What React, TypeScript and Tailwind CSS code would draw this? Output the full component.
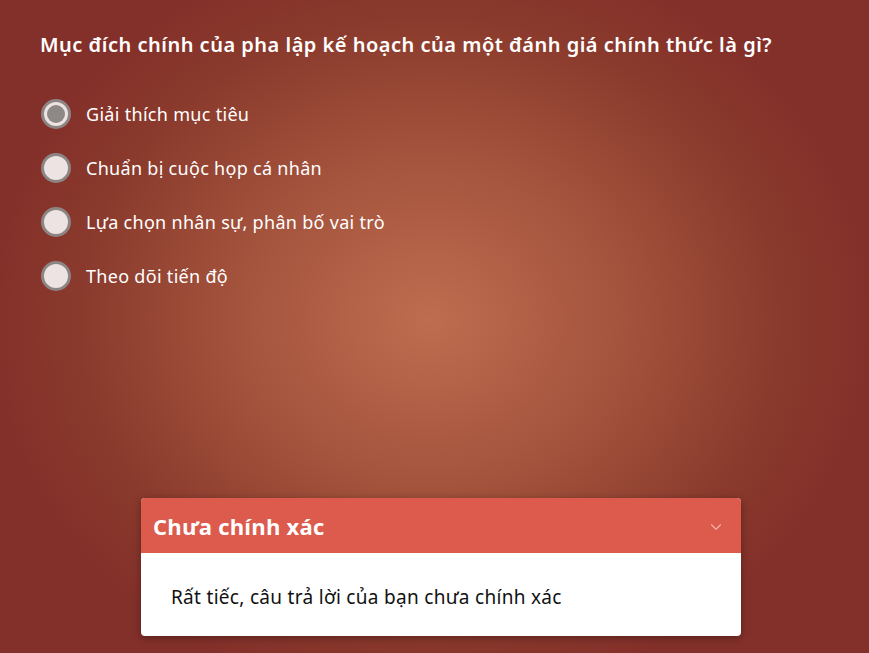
import { ChevronDown } from 'lucide-react'

const options = [
  'Giải thích mục tiêu',
  'Chuẩn bị cuộc họp cá nhân',
  'Lựa chọn nhân sự, phân bố vai trò',
  'Theo dõi tiến độ',
]

function Radio({ checked }: { checked: boolean }) {
  return (
    <span className="flex h-[30px] w-[30px] shrink-0 items-center justify-center rounded-full border-[3px] border-[#8c8584] bg-[#ede3e2]">
      {checked && <span className="h-[18px] w-[18px] rounded-full bg-[#8e8887]" />}
    </span>
  )
}

export default function App() {
  return (
    <div
      className="flex h-[653px] w-[869px] flex-col overflow-hidden bg-[radial-gradient(ellipse_440px_380px_at_430px_320px,#bf6d50_0%,#a3523c_45%,#8a3a2c_80%,#84302a_100%)] text-white"
      style={{ fontFamily: '"Noto Sans", "Open Sans", sans-serif' }}
    >
      <h1 className="ml-10 mt-[31px] text-[20px] font-semibold leading-7 tracking-[0.5px]">
        Mục đích chính của pha lập kế hoạch của một đánh giá chính thức là gì?
      </h1>

      <div className="ml-[41px] mt-[40px] flex flex-col gap-6">
        {options.map((label, i) => (
          <label key={label} className="flex h-[30px] items-center gap-[15px]">
            <Radio checked={i === 0} />
            <span className="text-[18px] tracking-[0.3px]">{label}</span>
          </label>
        ))}
      </div>

      <div className="ml-[141px] mt-auto mb-[17px] w-[600px] overflow-hidden rounded-[4px] bg-white shadow-[0_2px_8px_rgba(0,0,0,0.35)]">
        <div className="flex h-[55px] items-center justify-between bg-[#dc5b4d] pl-3 pr-4 pt-[3px]">
          <span className="text-[22px] font-bold tracking-[0.2px]" style={{ fontFamily: '"Open Sans", sans-serif' }}>
            Chưa chính xác
          </span>
          <ChevronDown size={18} strokeWidth={1.5} className="text-[#f2b3ac]" />
        </div>
        <div className="px-[30px] pt-[30px] pb-[25px] text-[19px] tracking-[0.3px] text-[#111]">
          Rất tiếc, câu trả lời của bạn chưa chính xác
        </div>
      </div>
    </div>
  )
}
